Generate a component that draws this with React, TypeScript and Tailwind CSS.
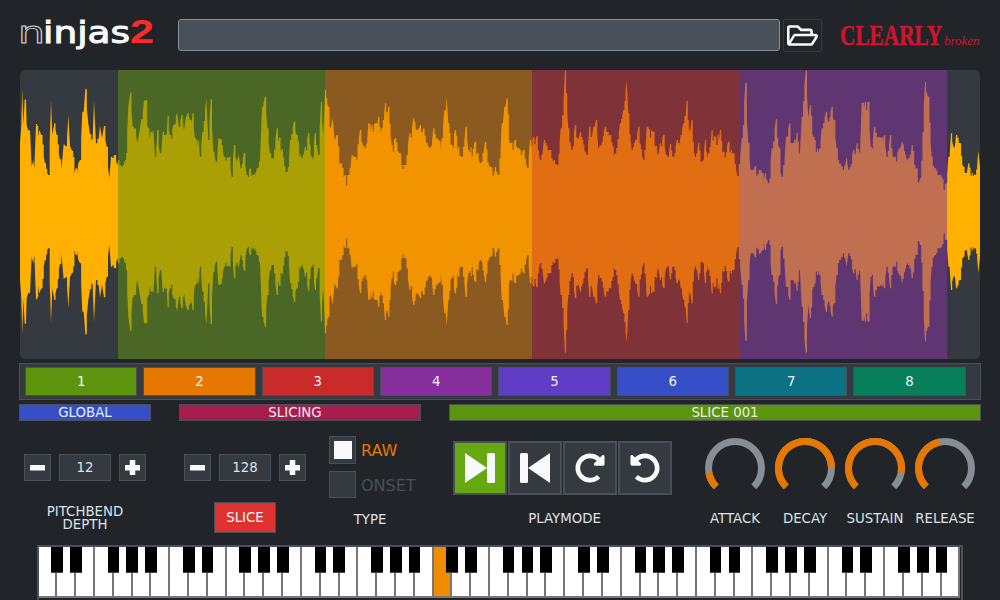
import React from "react";
import { FaRegFolderOpen, FaRedoAlt, FaUndoAlt } from "react-icons/fa";

const env: [number, number][] = [
[60,250],[64,195],[67,87],[70,195],[74,120],[78,118],[80,195],[85,212],[90,210],[95,320],[100,300],[103,325],[108,192],[118,210],[124,225],[135,310],[145,345],[153,122],[157,225],[163,190],[170,225],[180,298],[187,298],[191,252],[197,258],[205,165],[210,258],[216,272],[227,325],[235,310],[240,300],[247,155],[256,87],[265,190],[270,222],[278,235],[282,122],[288,250],[300,198],[306,235],[312,198],[320,260],[328,355],[333,290],[345,285],[352,315],
[355,300],[365,320],[375,300],[385,140],[391,97],[398,200],[405,205],[412,250],[418,215],[424,178],[432,122],[438,120],[445,205],[452,215],[460,210],[465,290],[472,210],[480,280],[488,215],[500,225],[503,168],[510,225],[520,195],[531,158],[537,200],[545,165],[552,210],[557,175],[563,160],[570,180],[578,160],[585,235],[596,235],[600,290],[607,215],[619,115],[625,240],[632,118],[640,275],[648,305],[655,235],[662,238],[672,290],[688,290],[695,350],[702,255],[710,305],[716,285],[722,325],[732,278],[740,345],[750,325],[760,345],[770,325],[780,300],[786,140],[795,110],[802,205],[810,280],[818,295],[830,205],[838,232],[860,335],[870,240],[882,185],[890,225],[905,295],[915,260],[925,218],[935,290],[945,220],[955,285],[963,125],[970,225],
[975,90],[985,140],[992,205],[998,175],[1004,240],[1010,225],[1022,310],[1035,345],[1045,345],[1055,285],[1065,290],[1080,210],[1095,265],[1105,190],[1115,195],[1125,190],[1135,170],[1145,205],[1155,130],[1165,140],[1175,255],[1185,235],[1200,280],[1215,315],[1228,220],[1240,175],[1250,210],[1260,195],[1270,205],[1285,260],[1300,205],[1315,240],[1325,235],[1333,150],[1340,112],[1345,190],[1355,255],[1365,210],[1375,260],[1385,290],[1397,200],[1405,270],[1425,245],[1440,310],[1455,245],[1470,320],[1485,320],[1495,345],[1505,190],[1513,140],[1520,115],[1530,250],[1545,240],[1555,265],[1570,270],[1582,325],[1590,240],
[1600,230],[1610,228],[1620,300],[1632,240],[1650,270],[1662,300],[1672,315],[1682,205],[1695,32],[1705,205],[1715,270],[1725,195],[1740,215],[1760,285],[1768,200],[1780,200],[1788,180],[1795,265],[1815,200],[1830,225],[1845,280],[1860,190],[1870,150],[1880,62],[1885,160],[1895,270],[1915,200],[1930,300],[1940,200],[1960,215],[1975,285],
[1980,250],[1990,225],[1998,285],[2010,252],[2020,290],[2030,240],[2042,225],[2050,190],[2060,122],[2070,215],[2075,180],[2085,290],[2095,250],[2105,305],[2115,240],[2125,280],[2135,210],[2145,230],[2160,210],[2170,275],[2185,245],[2200,280],[2212,348],[2225,235],[2236,68],[2245,250],[2252,330],[2265,318],[2280,330],[2295,340],[2305,370],[2315,265],[2328,178],[2338,265],[2345,350],[2358,230],[2368,190],[2375,250],[2390,218],[2400,275],[2405,170],[2417,32],[2425,175],[2430,135],[2440,230],[2458,265],[2465,205],[2478,155],[2485,185],[2495,140],[2502,180],[2510,265],[2525,320],[2540,290],[2545,330],[2560,270],[2570,250],[2580,280],[2585,128],[2595,125],[2605,125],[2612,260],[2622,200],[2635,230],[2652,225],[2660,290],[2670,225],[2685,290],[2705,245],[2725,295],[2735,255],[2750,325],[2760,355],[2775,66],[2785,110],[2795,290],[2805,325],[2820,345],[2838,370],[2845,290],[2853,220],[2860,260],[2868,225],[2880,250],[2890,320],[2905,310],[2925,345],[2935,272],[2940,320],
];

const hash = (i: number) => {
  const s = Math.sin(i * 12.9898) * 43758.5453;
  return s - Math.floor(s);
};

// points are traced at 3x: x/3 = page px, y/3 + 60 = page px; panel origin is (20, 70)
function buildTop() {
  const out: [number, number][] = [];
  let n = 0;
  for (let k = 0; k < env.length - 1; k++) {
    const x0 = env[k][0] / 3 - 20, y0 = env[k][1] / 3 - 10;
    const x1 = env[k + 1][0] / 3 - 20, y1 = env[k + 1][1] / 3 - 10;
    out.push([x0, y0]);
    const steps = Math.floor((x1 - x0) / 1.1);
    let prev = y0;
    for (let s = 1; s < steps; s++) {
      const t = s / steps;
      const x = x0 + (x1 - x0) * t;
      const h = hash(n++);
      const y = y0 + (y1 - y0) * t + h * h * 11;
      out.push([x, prev]);
      out.push([x, y]);
      prev = y;
    }
  }
  const last = env[env.length - 1];
  out.push([last[0] / 3 - 20, last[1] / 3 - 10]);
  return out;
}
const pts = buildTop();
const top = pts.map(([x, y]) => `${x.toFixed(2)},${y.toFixed(2)}`);
const bottom = [...pts].reverse().map(([x, y]) => `${x.toFixed(2)},${(283.33 - y).toFixed(2)}`);
const wavePoints = [...top, ...bottom].join(" ");

function Wave() {
  return (
    <svg className="absolute inset-0" width="960" height="289" viewBox="0 0 960 289">
      <defs>
        <linearGradient id="wv" gradientUnits="userSpaceOnUse" x1="0" y1="0" x2="960" y2="0">
          <stop offset="0.1021" stopColor="#ffb000" />
          <stop offset="0.1021" stopColor="#aaa006" />
          <stop offset="0.3177" stopColor="#aaa006" />
          <stop offset="0.3177" stopColor="#f29400" />
          <stop offset="0.5333" stopColor="#f29400" />
          <stop offset="0.5333" stopColor="#e26e14" />
          <stop offset="0.7493" stopColor="#e26e14" />
          <stop offset="0.7493" stopColor="#c06f50" />
          <stop offset="0.9653" stopColor="#c06f50" />
          <stop offset="0.9653" stopColor="#ffb000" />
        </linearGradient>
      </defs>
      <polygon points={wavePoints} fill="url(#wv)" />
    </svg>
  );
}

function Stepper({ value }: { value: string }) {
  return (
    <div className="flex items-center">
      <button className="w-[27px] h-[27px] flex items-center justify-center bg-[#343a40] border border-[#495057]">
        <svg width="15" height="15" viewBox="0 0 15 15" fill="#f8f9fa"><rect x="0" y="5" width="15" height="5.5" rx="0.5" /></svg>
      </button>
      <div className="w-[52px] h-[27px] ml-2 mr-2 flex items-center justify-center bg-[#343a40] border border-[#495057] text-[#dee2e6]">{value}</div>
      <button className="w-[27px] h-[27px] flex items-center justify-center bg-[#343a40] border border-[#495057]">
        <svg width="15" height="15" viewBox="0 0 15 15" fill="#f8f9fa"><rect x="0" y="5" width="15" height="5.5" rx="0.5" /><rect x="4.75" y="0" width="5.5" height="15" rx="0.5" /></svg>
      </button>
    </div>
  );
}

function arc(cx: number, cy: number, r: number, a0: number, a1: number) {
  const p = (a: number) => [cx + r * Math.sin((a * Math.PI) / 180), cy - r * Math.cos((a * Math.PI) / 180)];
  const [x0, y0] = p(a0);
  const [x1, y1] = p(a1);
  return `M${x0} ${y0}A${r} ${r} 0 ${a1 - a0 > 180 ? 1 : 0} 1 ${x1} ${y1}`;
}

function Knob({ label, value }: { label: string; value: number }) {
  const end = -135 + 270 * value;
  return (
    <div className="w-[70px] flex flex-col items-center">
      <svg width="60" height="60" viewBox="0 0 60 60">
        <path d={arc(30, 30, 26.5, -135, 135)} fill="none" stroke="#868e96" strokeWidth="7" />
        <path d={arc(30, 30, 26.5, -135, end)} fill="none" stroke="#e67700" strokeWidth="7" />
      </svg>
      <div className="mt-[13px] leading-[16px] text-[#dee2e6] whitespace-nowrap">{label}</div>
    </div>
  );
}

const whites = Array.from({ length: 49 }, (_, i) => i);
const blacks = whites.filter((i) => [0, 1, 3, 4, 5].includes(i % 7));

function Piano() {
  return (
    <div className="relative w-[926px] ml-[36.5px] h-[55px] border-2 border-b-0 border-[#495057] flex">
      {whites.map((i) => (
        <div key={i} className={`flex-1 h-[51px] border-r-2 border-b-2 border-[#777777] last:border-r-0 ${i === 21 ? "bg-[#f08c00]" : "bg-white"}`} />
      ))}
      {blacks.map((i) => (
        <div
          key={i}
          className="absolute top-0 w-[11.7px] h-[26px] bg-black border-b border-[#444]"
          style={{ left: i * 18.82 + 12.6 }}
        />
      ))}
    </div>
  );
}

const sliceBtns: [string, string][] = [
  ["1", "bg-[#5c940d]"], ["2", "bg-[#e67700]"], ["3", "bg-[#c92a2a]"], ["4", "bg-[#862e9c]"],
  ["5", "bg-[#5f3dc4]"], ["6", "bg-[#364fc7]"], ["7", "bg-[#0b7285]"], ["8", "bg-[#087f5b]"],
];

export default function App() {
  return (
    <div className="w-[1000px] h-[600px] overflow-hidden bg-[#212529] font-['DejaVu_Sans',sans-serif] text-[13.33px] text-[#dee2e6]">
      {/* header */}
      <div className="h-[70px] flex items-start">
        <svg className="ml-[16px] mt-[9px] shrink-0" width="140" height="50" viewBox="0 0 140 50">
          <text x="2" y="34" fontFamily="DejaVu Sans" fontSize="31" fill="none" stroke="#ced4da" strokeWidth="0.9" textLength="27" lengthAdjust="spacingAndGlyphs">n</text>
          <text x="27" y="34" fontFamily="DejaVu Sans" fontSize="31" fill="#f8f9fa" stroke="#f8f9fa" strokeWidth="1" textLength="87" lengthAdjust="spacingAndGlyphs">injas</text>
          <text x="114" y="34" fontFamily="Liberation Sans" fontWeight="700" fontSize="33" fill="#ff2b2b" textLength="24" lengthAdjust="spacingAndGlyphs">2</text>
        </svg>
        <div className="ml-[22px] mt-[19px] w-[602px] h-[32px] bg-[#495057] border border-[#868e96] rounded-[3px]" />
        <button className="ml-[3px] mt-[19px] w-[39px] h-[33px] border border-[#343a40] rounded-[2px] flex items-center justify-center text-[#f8f9fa]"><FaRegFolderOpen size={31} /></button>
        <div className="ml-[18px] mt-[20px] flex items-baseline whitespace-nowrap font-['Liberation_Serif',serif] text-[#d0142c]">
          <span className="font-bold text-[30px] leading-[30px] inline-block origin-left scale-x-[0.71] w-[104px] [-webkit-text-stroke:0.5px_#d0142c]">CLEARLY</span>
          <span className="italic text-[13px]">broken</span>
        </div>
      </div>

      {/* waveform */}
      <div className="relative mx-[20px] h-[289px] rounded-[5px] overflow-hidden flex">
        <div className="w-[98px] bg-[#343a40]" />
        <div className="w-[207px] bg-[#4b6726]" />
        <div className="w-[207px] bg-[#8b5a20]" />
        <div className="w-[207.3px] bg-[#7f3237]" />
        <div className="w-[207.4px] bg-[#5f3671]" />
        <div className="flex-1 bg-[#343a40]" />
        <Wave />
      </div>

      {/* slice buttons */}
      <div className="mt-[4px] mx-[19px] h-[37px] bg-[#343a40] border border-[#495057] flex items-center gap-[6px] pl-[5px]">
        {sliceBtns.map(([n, c]) => (
          <div key={n} className={`w-[112.33px] h-[29px] border border-[#495057] flex items-center justify-center text-[#f1f3f5] ${c}`}>{n}</div>
        ))}
      </div>

      {/* section bars */}
      <div className="mt-[4px] mx-[19px] flex gap-[28px]">
        <div className="w-[132px] h-[17px] bg-[#364fc7] border border-[#495057] leading-[15px] text-center text-[#e9ecef]">GLOBAL</div>
        <div className="w-[242px] h-[17px] pr-[10px] bg-[#a61e4d] border border-[#495057] leading-[15px] text-center text-[#e9ecef]">SLICING</div>
        <div className="flex-1 h-[17px] pl-[20px] bg-[#5c940d] border border-[#495057] leading-[15px] text-center text-[#e9ecef]">SLICE 001</div>
      </div>

      {/* controls */}
      <div className="h-[124px] flex">
        <div className="w-[184px] pl-[24px] pt-[33px] flex flex-col">
          <Stepper value="12" />
          <div className="mt-[24px] w-[122px] text-center leading-[13px]">PITCHBEND<br />DEPTH</div>
        </div>
        <div className="w-[145px] pt-[33px] flex flex-col">
          <Stepper value="128" />
          <button className="mt-[21px] ml-[30px] w-[62px] h-[31px] pt-[1px] bg-[#e03131] border border-[#495057] text-[#f8f9fa]">SLICE</button>
        </div>
        <div className="w-[124px] pt-[15px]">
          <div className="flex items-center gap-[5px]">
            <div className="w-[27px] h-[28px] bg-[#343a40] border border-[#495057] flex items-center justify-center"><div className="w-[18px] h-[18px] bg-[#f8f9fa]" /></div>
            <span className="text-[#e67700] text-[16px] leading-[20px] pt-[2px]">RAW</span>
          </div>
          <div className="mt-[7px] flex items-center gap-[5px]">
            <div className="w-[27px] h-[27px] bg-[#343a40] border border-[#495057]" />
            <span className="text-[#495057] text-[16px] leading-[20px] pt-[2px]">ONSET</span>
          </div>
          <div className="mt-[14px] w-[82px] text-center leading-[16px]">TYPE</div>
        </div>
        <div className="w-[247px] pt-[20px] flex flex-col">
          <div className="flex gap-px">
            <button className="w-[54px] h-[54px] bg-[#66a80f] border-2 border-[#495057] flex items-center justify-center">
              <svg width="32" height="32" viewBox="0 0 32 32" fill="#f8f9fa"><path d="M1 1L23 16L1 31Z" /><rect x="23" y="1" width="8" height="30" rx="1.5" /></svg>
            </button>
            <button className="w-[54px] h-[54px] bg-[#343a40] border-2 border-[#495057] flex items-center justify-center">
              <svg width="32" height="32" viewBox="0 0 32 32" fill="#f8f9fa"><path d="M31 1L9 16L31 31Z" /><rect x="1" y="1" width="8" height="30" rx="1.5" /></svg>
            </button>
            <button className="w-[54px] h-[54px] bg-[#343a40] border-2 border-[#495057] flex items-center justify-center text-[#f8f9fa]"><FaRedoAlt size={30} /></button>
            <button className="w-[54px] h-[54px] bg-[#343a40] border-2 border-[#495057] flex items-center justify-center text-[#f8f9fa]"><FaUndoAlt size={30} /></button>
          </div>
          <div className="mt-[16px] w-[223px] text-center leading-[16px]">PLAYMODE</div>
        </div>
        <div className="pt-[17px] flex">
          <Knob label="ATTACK" value={0.13} />
          <Knob label="DECAY" value={0.826} />
          <Knob label="SUSTAIN" value={0.87} />
          <Knob label="RELEASE" value={0.46} />
        </div>
      </div>

      <Piano />
    </div>
  );
}
